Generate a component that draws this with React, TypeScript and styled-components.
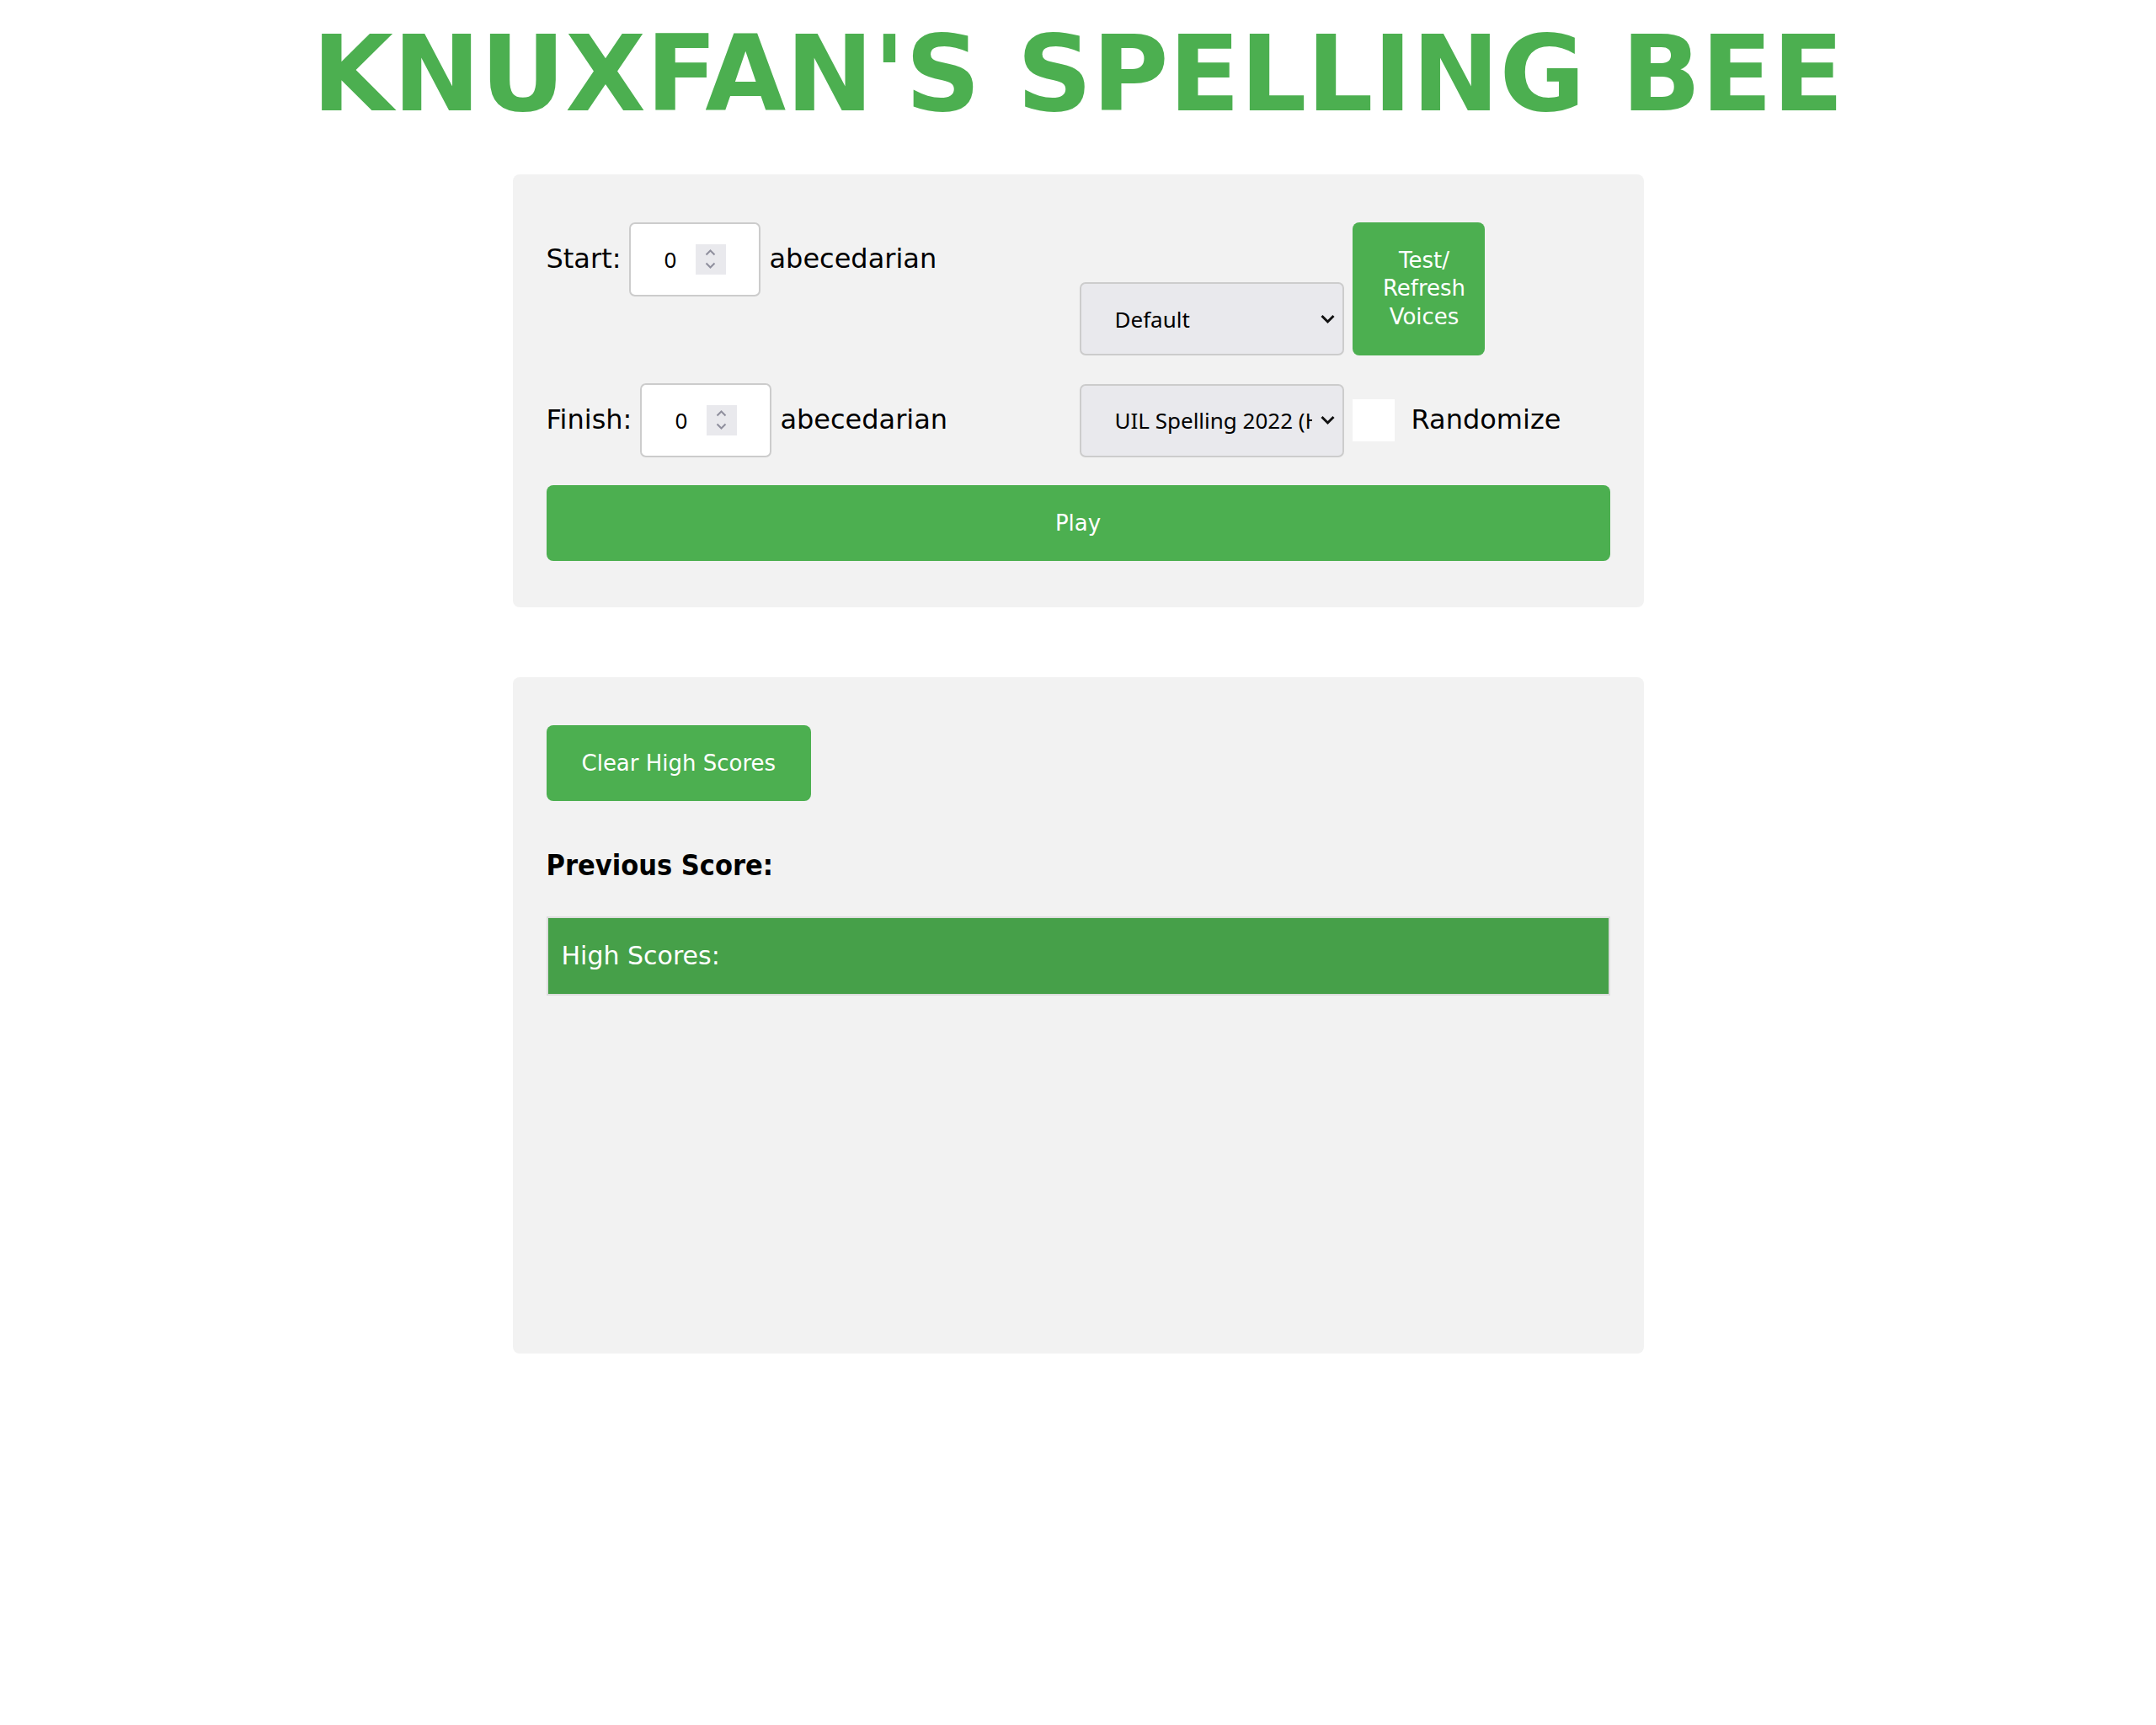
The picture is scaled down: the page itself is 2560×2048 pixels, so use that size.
import React from "react";
import styled, { createGlobalStyle } from "styled-components";

const GlobalStyle = createGlobalStyle`
  html, body {
    margin: 0;
    padding: 0;
    background: #ffffff;
  }
  body {
    font-family: "DejaVu Sans", "Liberation Sans", sans-serif;
    color: #000000;
  }
  *, *::before, *::after {
    box-sizing: border-box;
  }
`;

const Page = styled.div`
  display: flex;
  flex-direction: column;
  align-items: center;
  padding-bottom: 300px;
`;

const Title = styled.h1`
  margin: 16px 0 46px;
  font-family: "DejaVu Sans", sans-serif;
  font-weight: 700;
  font-size: 124px;
  line-height: 145px;
  color: #4caf50;
  text-align: center;
  white-space: nowrap;
`;

const Panel = styled.section<{ $gapBelow?: number; $minHeight?: number }>`
  width: 1343px;
  background: #f2f2f2;
  border-radius: 8px;
  display: flex;
  flex-direction: column;
  padding: 57px 40px 55px;
  margin-bottom: ${(p) => p.$gapBelow ?? 0}px;
  min-height: ${(p) => (p.$minHeight ? `${p.$minHeight}px` : "auto")};
`;

const ControlsGrid = styled.div`
  display: grid;
  grid-template-columns: 633px 1fr;
  row-gap: 33px;
`;

const FieldGroup = styled.div<{ $align: "start" | "end" | "center"; $items: "center" | "flex-end" }>`
  display: flex;
  align-items: ${(p) => p.$items};
  gap: 10px;
  align-self: ${(p) => p.$align};
`;

const Label = styled.span<{ $offset?: number }>`
  font-size: 32px;
  line-height: 1.164;
  white-space: nowrap;
  margin-left: ${(p) => p.$offset ?? 0}px;
`;

const NumberField = styled.div`
  display: flex;
  align-items: center;
  justify-content: space-between;
  width: 156px;
  height: 88px;
  padding: 0 39px;
  background: #ffffff;
  border: 2px solid #cccccc;
  border-radius: 7px;
  flex-shrink: 0;
`;

const NumberValue = styled.input`
  width: 32px;
  border: none;
  outline: none;
  background: transparent;
  padding: 0;
  margin: 0;
  font-family: "Noto Sans", sans-serif;
  font-size: 26px;
  color: #000000;
`;

const Spinner = styled.span`
  display: block;
  width: 36px;
  height: 36px;
  background: #e9e9ed;
  flex-shrink: 0;
`;

const SelectWrap = styled.div`
  position: relative;
  width: 314px;
  height: 87px;
  flex-shrink: 0;
`;

const Select = styled.select`
  appearance: none;
  -webkit-appearance: none;
  width: 100%;
  height: 100%;
  margin: 0;
  padding: 0 36px 0 40px;
  border: 2px solid #cccccc;
  border-radius: 7px;
  background: #e9e9ed;
  font-family: "Noto Sans", sans-serif;
  font-size: 26px;
  color: #000000;
  outline: none;
`;

const Chevron = styled.svg`
  position: absolute;
  right: 11px;
  top: 50%;
  transform: translateY(-50%);
  pointer-events: none;
`;

const GreenButton = styled.button<{ $full?: boolean }>`
  display: inline-flex;
  align-items: center;
  justify-content: center;
  height: 90px;
  width: ${(p) => (p.$full ? "100%" : "auto")};
  padding: 0 42px;
  border: none;
  border-radius: 8px;
  background: #4caf50;
  color: #ffffff;
  font-family: "DejaVu Sans", sans-serif;
  font-size: 26px;
  white-space: nowrap;
  cursor: pointer;
`;

const PlayButton = styled(GreenButton)`
  margin-top: 33px;
`;

const ClearButton = styled(GreenButton)`
  align-self: flex-start;
`;

const VoiceButton = styled.button`
  width: 157px;
  height: 158px;
  padding: 0 16px 0 30px;
  border: none;
  border-radius: 8px;
  background: #4caf50;
  color: #ffffff;
  font-family: "DejaVu Sans", sans-serif;
  font-size: 26px;
  line-height: 33.5px;
  text-align: center;
  flex-shrink: 0;
  cursor: pointer;
`;

const Checkbox = styled.input`
  appearance: none;
  -webkit-appearance: none;
  width: 50px;
  height: 50px;
  margin: 0;
  border: none;
  border-radius: 0;
  background: #ffffff;
  flex-shrink: 0;
`;

const ScoreHeading = styled.h3`
  margin: 57px 0 40px;
  font-family: "DejaVu Sans Condensed", "DejaVu Sans", sans-serif;
  font-stretch: condensed;
  font-size: 34px;
  font-weight: 700;
  line-height: 1.164;
`;

const ScoreBar = styled.div`
  display: flex;
  align-items: center;
  height: 94px;
  padding: 0 16px;
  border: 2px solid #dddddd;
  background: #46a049;
  color: #ffffff;
  font-size: 30px;
`;

const ScoreList = styled.div`
  flex: 1;
`;

function NumberInput() {
  return (
    <NumberField>
      <NumberValue type="text" defaultValue="0" readOnly />
      <Spinner>
        <svg width="36" height="36" viewBox="0 0 36 36" fill="none">
          <path d="M12.5 12.5 L17.5 7.5 L22.5 12.5" stroke="#8f8f9d" strokeWidth="2" />
          <path d="M12.5 22.5 L17.5 27.5 L22.5 22.5" stroke="#8f8f9d" strokeWidth="2" />
        </svg>
      </Spinner>
    </NumberField>
  );
}

function Dropdown({ options }: { options: string[] }) {
  return (
    <SelectWrap>
      <Select defaultValue={options[0]}>
        {options.map((o) => (
          <option key={o}>{o}</option>
        ))}
      </Select>
      <Chevron width="17" height="11" viewBox="0 0 17 11" fill="none">
        <path d="M1.5 1.5 L8.5 8.5 L15.5 1.5" stroke="#111" strokeWidth="3" />
      </Chevron>
    </SelectWrap>
  );
}

export default function App() {
  return (
    <>
      <GlobalStyle />
      <Page>
        <Title>KNUXFAN'S SPELLING BEE</Title>
        <Panel $gapBelow={83}>
          <ControlsGrid>
            <FieldGroup $align="start" $items="center">
              <Label>Start:</Label>
              <NumberInput />
              <Label>abecedarian</Label>
            </FieldGroup>
            <FieldGroup $align="end" $items="flex-end">
              <Dropdown options={["Default"]} />
              <VoiceButton>Test/ Refresh Voices</VoiceButton>
            </FieldGroup>
            <FieldGroup $align="center" $items="center">
              <Label>Finish:</Label>
              <NumberInput />
              <Label>abecedarian</Label>
            </FieldGroup>
            <FieldGroup $align="center" $items="center">
              <Dropdown options={["UIL Spelling 2022 (High School)"]} />
              <Checkbox type="checkbox" />
              <Label $offset={10}>Randomize</Label>
            </FieldGroup>
          </ControlsGrid>
          <PlayButton $full>Play</PlayButton>
        </Panel>
        <Panel $minHeight={803}>
          <ClearButton>Clear High Scores</ClearButton>
          <ScoreHeading>Previous Score:</ScoreHeading>
          <ScoreBar>High Scores:</ScoreBar>
          <ScoreList />
        </Panel>
      </Page>
    </>
  );
}
